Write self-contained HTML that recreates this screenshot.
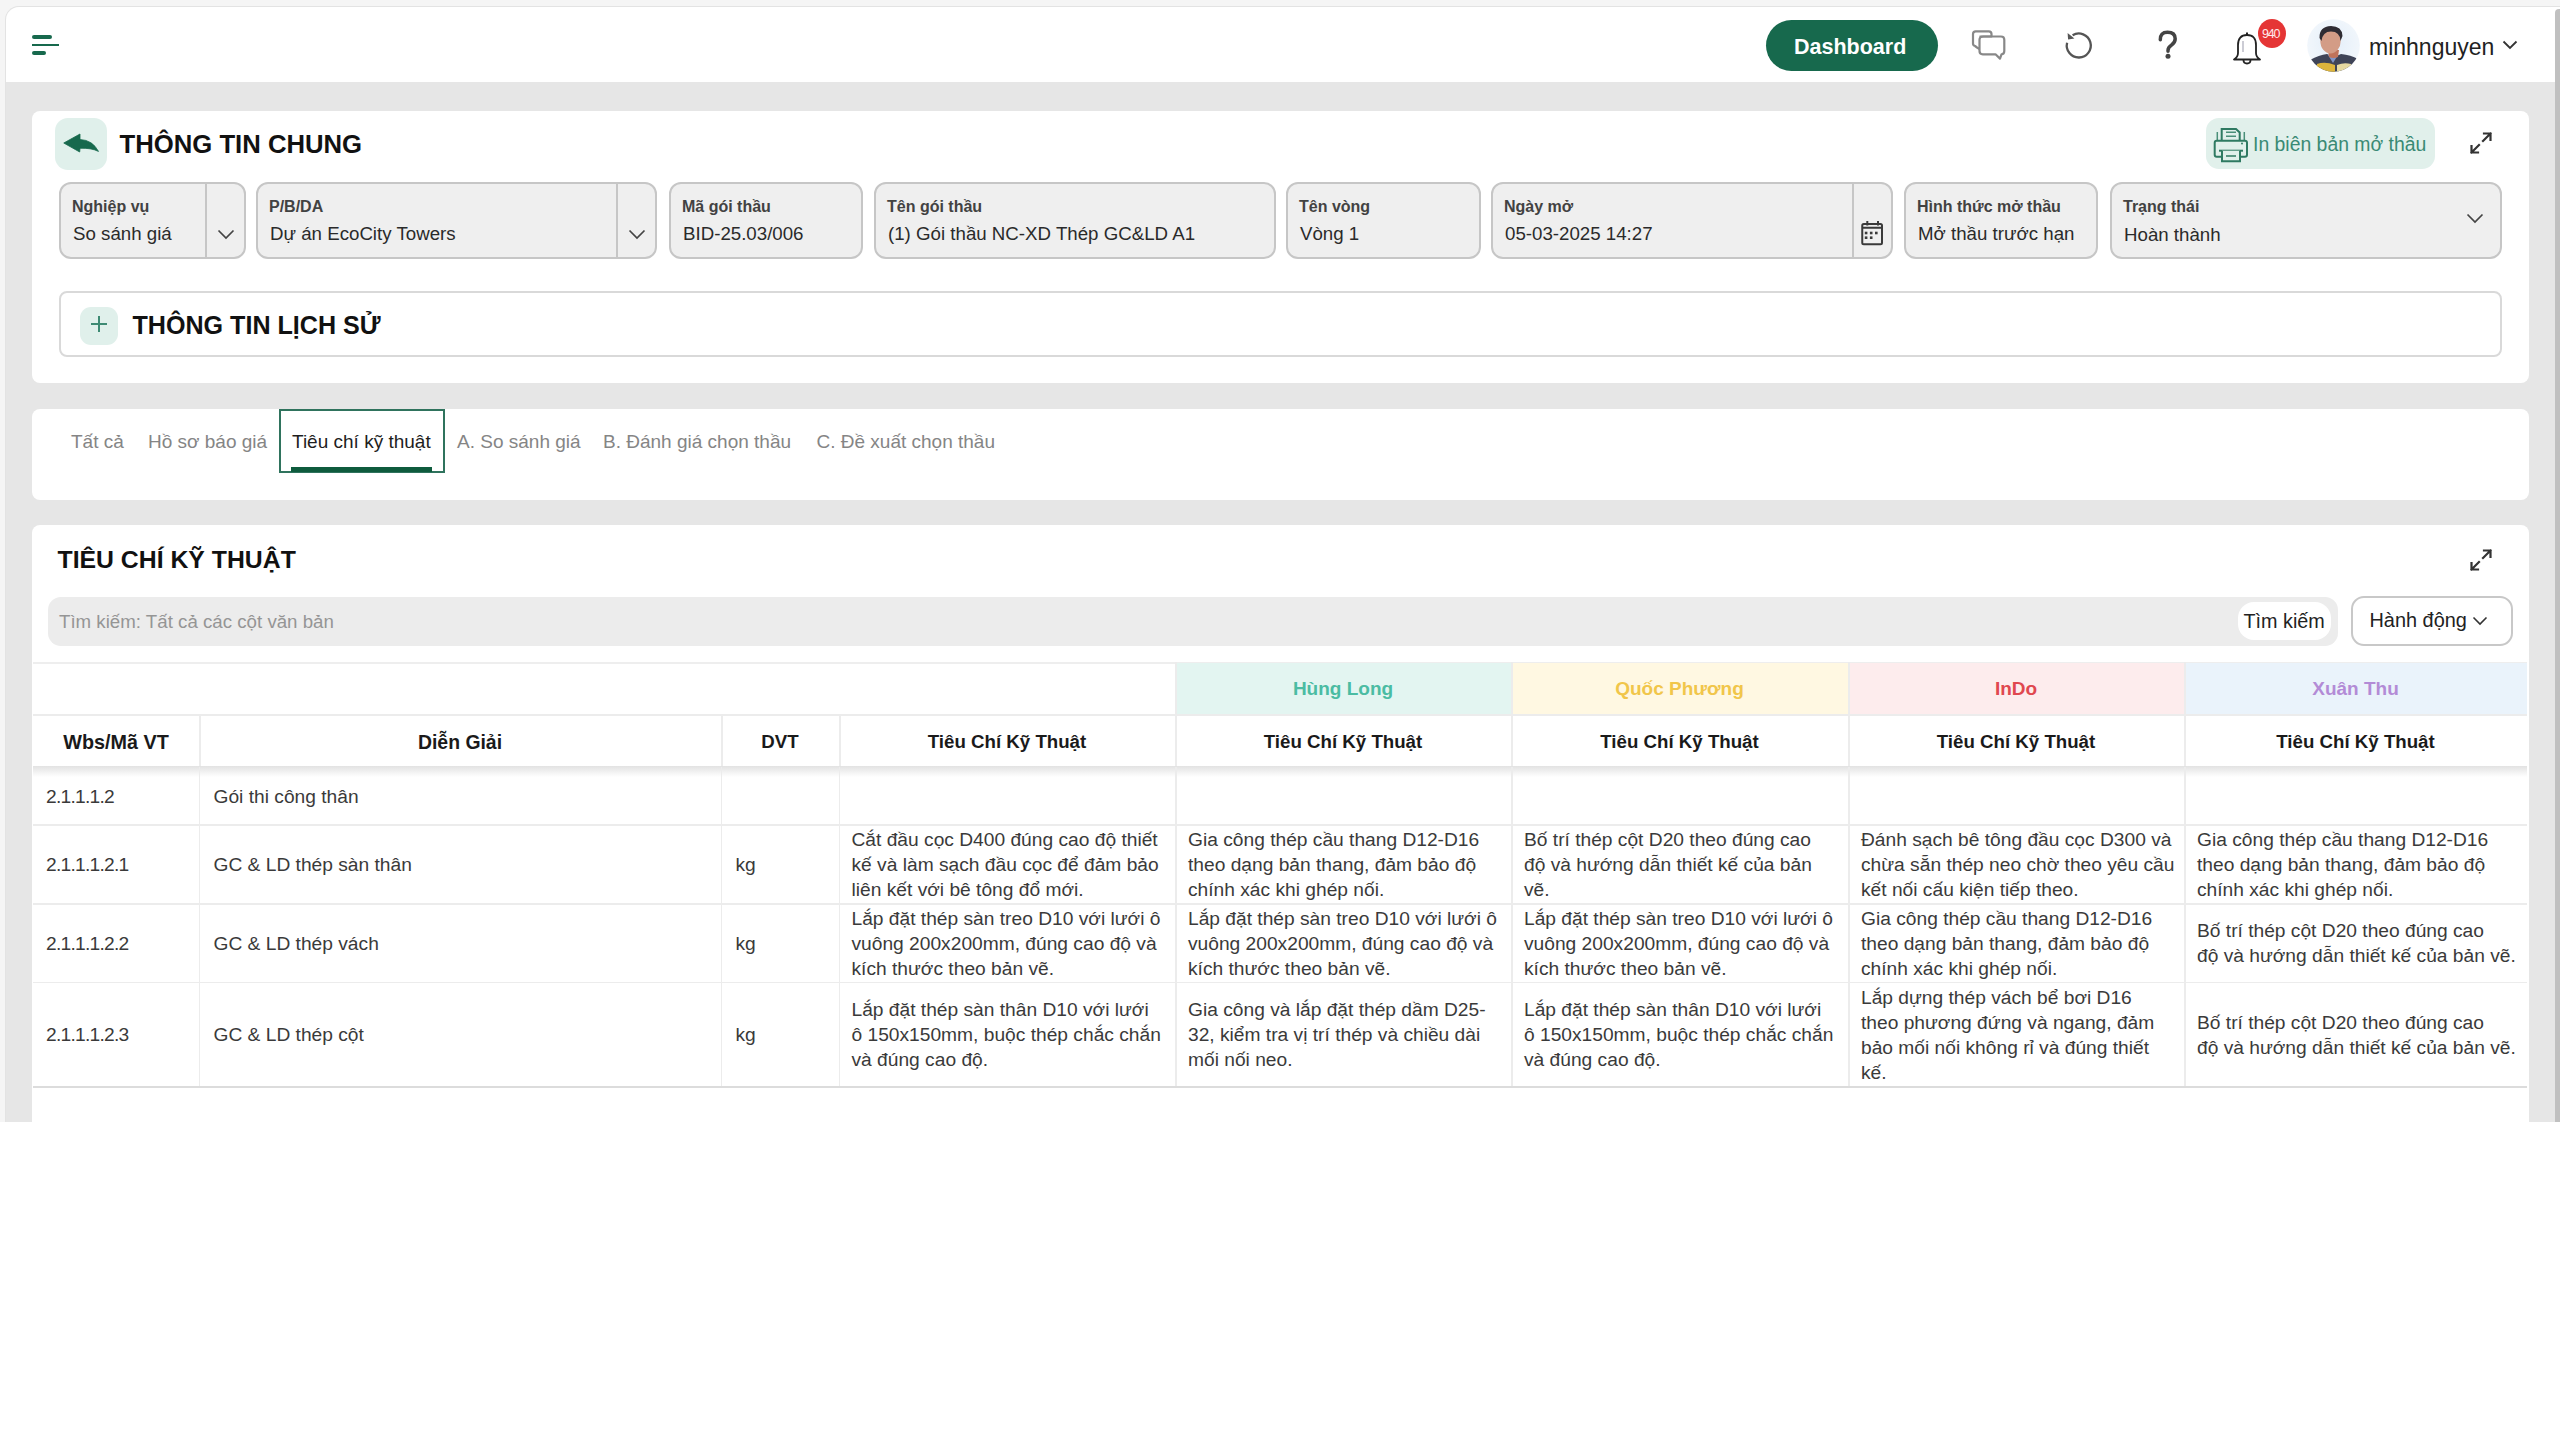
<!DOCTYPE html>
<html><head><meta charset="utf-8">
<style>
*{box-sizing:border-box;margin:0;padding:0}
html,body{width:2560px;height:1440px;overflow:hidden;background:#fff}
body{position:relative;font-family:"Liberation Sans",sans-serif;color:#222}
.abs{position:absolute}
.t{position:absolute;white-space:nowrap;line-height:1}
.card{position:absolute;background:#fff;border-radius:10px}
.fld{position:absolute;background:#efefef;border:2px solid #c6c6c6;border-radius:12px}
.sep{position:absolute;top:0;bottom:0;width:2px;background:#c6c6c6}
.cell{position:absolute;display:flex;align-items:center;font-size:19.2px;line-height:25px;color:#3a3a3a}
.hc{position:absolute;display:flex;align-items:center;justify-content:center;font-weight:bold;font-size:18.7px;color:#1a1a1a}
</style></head>
<body>
<div class="abs" style="left:0px;top:0px;width:2560px;height:1122px;background:#f5f5f5"></div>
<div class="abs" style="left:5px;top:6px;width:2555px;height:1116px;background:#e6e6e6;border-top:1px solid #e3e3e3;border-left:1px solid #e3e3e3;border-top-left-radius:14px;overflow:hidden"><div class="abs" style="left:0;top:0;width:2554px;height:75px;background:#fff"></div></div>
<div class="abs" style="left:2554.5px;top:8.5px;width:5.5px;height:1113.5px;background:#c0c0c0;border-top-left-radius:4px"></div>
<div class="abs" style="left:32px;top:35px;width:20px;height:4px;background:#17694d;border-radius:2px"></div>
<div class="abs" style="left:32px;top:44px;width:27px;height:2px;background:#17694d"></div>
<div class="abs" style="left:32px;top:51px;width:14px;height:4px;background:#17694d;border-radius:2px"></div>
<div class="abs" style="left:1766px;top:20px;width:172px;height:51px;background:#17694d;border-radius:26px"></div>
<div class="t" id="t_dash" style="left:1794.00px;top:36.80px;font-size:21.5px;color:#fff;font-weight:bold;">Dashboard</div>
<svg class="abs" style="left:1960px;top:20px;" width="60" height="50" viewBox="0 0 60 50"><g fill="none" stroke="#888" stroke-width="2.2" stroke-linejoin="round"><path d="M19.5 16.5 H31.5 V14 Q31.5 11.3 28.8 11.3 H15.7 Q13 11.3 13 14 V23.5 Q13 25.5 15 26 L17 27.5 L19.5 29"/><path d="M23.5 16.5 H41 Q44.3 16.5 44.3 19.8 V31 Q44.3 34.2 41.5 34.3 L40 38.6 L35.5 34.3 H22.8 Q19.5 34.3 19.5 31 V19.8 Q19.5 16.5 23.5 16.5 Z"/></g></svg>
<svg class="abs" style="left:2055px;top:20px;" width="50" height="50" viewBox="0 0 50 50"><path d="M12.1 22.7 A12 12 0 1 0 17.6 15.2" fill="none" stroke="#555" stroke-width="2.3"/><path d="M12.6 12.9 L13.1 19.6 L19.4 18.4 Z" fill="#555"/></svg>
<svg class="abs" style="left:2156px;top:30px;" width="24" height="32" viewBox="0 0 24 32"><path d="M4.3 9.8 Q4 2.3 11.5 2.3 Q19.2 2.3 19.2 8.8 Q19.2 12.8 15.3 15.2 Q12 17.3 12 20.5 V21.3" fill="none" stroke="#444" stroke-width="3.5" stroke-linecap="round"/><circle cx="12" cy="26.2" r="2.5" fill="#444"/></svg>
<svg class="abs" style="left:2230px;top:30px;" width="34" height="36" viewBox="0 0 34 36"><path d="M17 2.5 V5" stroke="#222" stroke-width="2"/><path d="M17 5 Q8 5 8 15 V23 Q8 27 4 29.5 H30 Q26 27 26 23 V15 Q26 5 17 5 Z" fill="#fff" stroke="#222" stroke-width="1.8" stroke-linejoin="round"/><path d="M13.5 30 Q13.5 33.5 17 33.5 Q20.5 33.5 20.5 30" fill="none" stroke="#222" stroke-width="1.8"/><path d="M13 11 V22" stroke="#99a" stroke-width="1"/></svg>
<div class="abs" style="left:2258px;top:19px;width:28px;height:29px;background:#e53535;border-radius:50%"></div>
<div class="t" style="left:2262.00px;top:27.92px;font-size:12.5px;color:#ffeaea;letter-spacing:-1.2px;">940</div>
<svg class="abs" style="left:2307px;top:19px;" width="53" height="53" viewBox="0 0 53 53"><defs><clipPath id="av"><circle cx="26.5" cy="26.5" r="26.3"/></clipPath><radialGradient id="avbg" cx="0.5" cy="0.45" r="0.6"><stop offset="0" stop-color="#e3eef9"/><stop offset="1" stop-color="#f4f8fc"/></radialGradient></defs><g clip-path="url(#av)"><rect width="53" height="53" fill="url(#avbg)"/><path d="M3 41 Q12 36 20 35 L27 38 L34 35 Q44 36 51 40 V53 H3 Z" fill="#3f4457"/><path d="M21 36 L26 44 L31 36 Z" fill="#8095c8"/><path d="M10 45 Q18 42 28 46 V53 H10 Z" fill="#dcb43c"/><path d="M30 46 Q37 43 44 45 V53 H30 Z" fill="#e6d9a0"/><path d="M21 31 L22 38 Q26.5 40 31 38 L32 31 Z" fill="#c0735a"/><ellipse cx="23.5" cy="22" rx="10.2" ry="12.5" fill="#d39c86"/><path d="M12.5 19 Q12 7.5 24 7 Q35 7 35.5 17 L33.5 22 Q33 12.5 24 12.5 Q15.5 12.5 14.5 22 Z" fill="#2e2b33"/></g></svg>
<div class="t" id="t_user" style="left:2369.00px;top:36.03px;font-size:23px;color:#222;">minhnguyen</div>
<svg class="abs" style="left:2502px;top:40px;" width="16" height="10" viewBox="0 0 16 10"><path d="M1.5 1.5 L8 8 L14.5 1.5" fill="none" stroke="#333" stroke-width="1.8"/></svg>
<div class="abs" style="left:32px;top:111px;width:2497px;height:272px;background:#fff;border-radius:8px"></div>
<div class="abs" style="left:55px;top:118px;width:52px;height:52px;background:#e0f0eb;border-radius:13px"></div>
<svg class="abs" style="left:55px;top:118px;" width="52" height="52" viewBox="0 0 52 52"><path d="M8.75 25 L25 16 L25 21.5 Q37.5 22 43.5 33.4 Q36 29.8 25 30.3 L24.7 34 Z" fill="#17694d" stroke="#17694d" stroke-width="0.8" stroke-linejoin="round"/></svg>
<div class="t" id="t_c1" style="left:119.50px;top:131.74px;font-size:25.7px;color:#111;font-weight:bold;">THÔNG TIN CHUNG</div>
<div class="abs" style="left:2206px;top:118px;width:229px;height:51px;background:#e1f0eb;border-radius:13px"></div>
<svg class="abs" style="left:2210px;top:126px;" width="42" height="38" viewBox="0 0 42 38"><g fill="none" stroke="#2f7a62" stroke-width="2"><path d="M11.7 14 V3 H26 L29.7 6.5 V14"/><path d="M16 6.3 H26 M16 10.3 H26" stroke-width="1.5" stroke="#4a8f79"/><path d="M7.3 6 V14 M34.3 6 V14" stroke-width="1.5" stroke="#4a8f79"/><rect x="4.7" y="14.7" width="32.3" height="16" rx="2"/><path d="M9 24.7 H33"/><path d="M12 24.7 V35.3 H30 V24.7" fill="#e1f0eb"/><path d="M16 30 H26" stroke-width="1.5"/></g><circle cx="32" cy="17.6" r="1" fill="#2f7a62"/></svg>
<div class="t" id="t_print" style="left:2253.00px;top:134.77px;font-size:19.4px;color:#3a8a74;">In biên bản mở thầu</div>
<svg class="abs" style="left:2469px;top:131px;" width="24" height="24" viewBox="0 0 24 24"><g fill="none" stroke="#333" stroke-width="2.2" stroke-linecap="square"><path d="M14 10 L21.5 2.5 M15 2.5 H21.5 V9"/><path d="M10 14 L2.5 21.5 M2.5 15 V21.5 H9"/></g></svg>
<div class="fld" style="left:59px;top:182px;width:187px;height:77px"><div class="sep" style="left:144px"></div></div>
<div class="t" id="fl0" style="left:72.00px;top:199.45px;font-size:16px;color:#424242;font-weight:bold;">Nghiệp vụ</div>
<div class="t" id="fv0" style="left:73.00px;top:224.97px;font-size:18.7px;color:#2a2a2a;">So sánh giá</div>
<svg class="abs" style="left:216.5px;top:229px;" width="18" height="11" viewBox="0 0 18 11"><path d="M1.5 1.5 L9 9 L16.5 1.5" fill="none" stroke="#444" stroke-width="1.7"/></svg>
<div class="fld" style="left:256px;top:182px;width:401px;height:77px"><div class="sep" style="left:358px"></div></div>
<div class="t" id="fl1" style="left:269.00px;top:199.45px;font-size:16px;color:#424242;font-weight:bold;">P/B/DA</div>
<div class="t" id="fv1" style="left:270.00px;top:224.97px;font-size:18.7px;color:#2a2a2a;">Dự án EcoCity Towers</div>
<svg class="abs" style="left:627.5px;top:229px;" width="18" height="11" viewBox="0 0 18 11"><path d="M1.5 1.5 L9 9 L16.5 1.5" fill="none" stroke="#444" stroke-width="1.7"/></svg>
<div class="fld" style="left:669px;top:182px;width:194px;height:77px"></div>
<div class="t" id="fl2" style="left:682.00px;top:199.45px;font-size:16px;color:#424242;font-weight:bold;">Mã gói thầu</div>
<div class="t" id="fv2" style="left:683.00px;top:224.97px;font-size:18.7px;color:#2a2a2a;">BID-25.03/006</div>
<div class="fld" style="left:874px;top:182px;width:402px;height:77px"></div>
<div class="t" id="fl3" style="left:887.00px;top:199.45px;font-size:16px;color:#424242;font-weight:bold;">Tên gói thầu</div>
<div class="t" id="fv3" style="left:888.00px;top:224.97px;font-size:18.7px;color:#2a2a2a;">(1) Gói thầu NC-XD Thép GC&amp;LD A1</div>
<div class="fld" style="left:1286px;top:182px;width:195px;height:77px"></div>
<div class="t" id="fl4" style="left:1299.00px;top:199.45px;font-size:16px;color:#424242;font-weight:bold;">Tên vòng</div>
<div class="t" id="fv4" style="left:1300.00px;top:224.97px;font-size:18.7px;color:#2a2a2a;">Vòng 1</div>
<div class="fld" style="left:1491px;top:182px;width:402px;height:77px"><div class="sep" style="left:359px"></div></div>
<div class="t" id="fl5" style="left:1504.00px;top:199.45px;font-size:16px;color:#424242;font-weight:bold;">Ngày mở</div>
<div class="t" id="fv5" style="left:1505.00px;top:224.97px;font-size:18.7px;color:#2a2a2a;">05-03-2025 14:27</div>
<svg class="abs" style="left:1859px;top:219px;" width="26" height="28" viewBox="0 0 26 28"><g fill="none" stroke="#3a3a3a" stroke-width="2"><rect x="3.25" y="5" width="19.75" height="20.2" rx="1.5"/><path d="M3.25 8.8 H23 M8.3 2 V6.5 M19 2 V6.5"/></g><g fill="#3a3a3a"><rect x="5.8" y="12.7" width="2.6" height="2.6"/><rect x="10.9" y="12.7" width="2.6" height="2.6"/><rect x="16" y="12.7" width="2.6" height="2.6"/><rect x="5.8" y="17.4" width="2.6" height="2.6"/><rect x="10.9" y="17.4" width="2.6" height="2.6"/></g></svg>
<div class="fld" style="left:1904px;top:182px;width:194px;height:77px"></div>
<div class="t" id="fl6" style="left:1917.00px;top:199.45px;font-size:16px;color:#424242;font-weight:bold;">Hình thức mở thầu</div>
<div class="t" id="fv6" style="left:1918.00px;top:224.97px;font-size:18.7px;color:#2a2a2a;">Mở thầu trước hạn</div>
<div class="fld" style="left:2110px;top:182px;width:392px;height:77px"></div>
<div class="t" id="fl7" style="left:2123.00px;top:199.45px;font-size:16px;color:#424242;font-weight:bold;">Trạng thái</div>
<div class="t" id="fv7" style="left:2124.00px;top:226.17px;font-size:18.7px;color:#2a2a2a;">Hoàn thành</div>
<svg class="abs" style="left:2466px;top:213px;" width="18" height="11" viewBox="0 0 18 11"><path d="M1.5 1.5 L9 9 L16.5 1.5" fill="none" stroke="#444" stroke-width="1.7"/></svg>
<div class="abs" style="left:59px;top:291px;width:2443px;height:66px;border:2px solid #d9d9d9;border-radius:8px;background:#fff"></div>
<div class="abs" style="left:80px;top:307px;width:38px;height:38px;background:#e0f0eb;border-radius:11px"></div>
<div class="abs" style="left:91px;top:323.2px;width:16px;height:1.8px;background:#3d8a73"></div>
<div class="abs" style="left:98.1px;top:316px;width:1.8px;height:16px;background:#3d8a73"></div>
<div class="t" id="t_hist" style="left:132.50px;top:312.75px;font-size:25.1px;color:#111;font-weight:bold;">THÔNG TIN LỊCH SỬ</div>
<div class="abs" style="left:32px;top:409px;width:2497px;height:91px;background:#fff;border-radius:8px"></div>
<div class="abs" style="left:279px;top:409px;width:166px;height:64px;border:2px solid #2f735d"></div>
<div class="abs" style="left:291px;top:467px;width:141px;height:5px;background:#0e5b3d"></div>
<div class="t" id="tab0" style="left:71.00px;top:431.91px;font-size:19px;color:#858585;">Tất cả</div>
<div class="t" id="tab1" style="left:148.00px;top:431.91px;font-size:19px;color:#858585;">Hồ sơ báo giá</div>
<div class="t" id="tab2" style="left:292.00px;top:431.91px;font-size:19px;color:#1e1e1e;">Tiêu chí kỹ thuật</div>
<div class="t" id="tab3" style="left:457.00px;top:431.91px;font-size:19px;color:#858585;">A. So sánh giá</div>
<div class="t" id="tab4" style="left:603.00px;top:431.91px;font-size:19px;color:#858585;">B. Đánh giá chọn thầu</div>
<div class="t" id="tab5" style="left:816.50px;top:431.91px;font-size:19px;color:#858585;">C. Đề xuất chọn thầu</div>
<div class="abs" style="left:32px;top:525px;width:2497px;height:597px;background:#fff;border-top-left-radius:8px;border-top-right-radius:8px"></div>
<div class="t" id="t_c3" style="left:57.50px;top:547.50px;font-size:24.8px;color:#111;font-weight:bold;">TIÊU CHÍ KỸ THUẬT</div>
<svg class="abs" style="left:2469px;top:548px;" width="24" height="24" viewBox="0 0 24 24"><g fill="none" stroke="#333" stroke-width="2.2" stroke-linecap="square"><path d="M14 10 L21.5 2.5 M15 2.5 H21.5 V9"/><path d="M10 14 L2.5 21.5 M2.5 15 V21.5 H9"/></g></svg>
<div class="abs" style="left:48px;top:597px;width:2290px;height:49px;background:#ececec;border-radius:13px"></div>
<div class="t" id="t_ph" style="left:59.00px;top:612.77px;font-size:18.7px;color:#959595;">Tìm kiếm: Tất cả các cột văn bản</div>
<div class="abs" style="left:2238px;top:602px;width:93px;height:38px;background:#fff;border-radius:16px"></div>
<div class="t" id="t_tk" style="left:2243.50px;top:611.54px;font-size:19.8px;color:#222;">Tìm kiếm</div>
<div class="abs" style="left:2351px;top:596px;width:162px;height:50px;border:2px solid #c8c8c8;border-radius:13px;background:#fff"></div>
<div class="t" id="t_hd" style="left:2369.50px;top:611.45px;font-size:19.9px;color:#222;">Hành động</div>
<svg class="abs" style="left:2472px;top:616px;" width="16" height="11" viewBox="0 0 16 11"><path d="M1.5 1.5 L8 8 L14.5 1.5" fill="none" stroke="#333" stroke-width="1.6"/></svg>
<div class="abs" style="left:33px;top:662px;width:2494px;height:1.5px;background:#eeeeee"></div>
<div class="abs" style="left:1175px;top:663px;width:336px;height:52px;background:#e3f5f1"></div>
<div class="hc" style="left:1175px;top:663px;width:336px;height:52px;color:#4bbca3;font-size:19px;padding-bottom:1px">Hùng Long</div>
<div class="abs" style="left:1511px;top:663px;width:337px;height:52px;background:#fff8e2"></div>
<div class="hc" style="left:1511px;top:663px;width:337px;height:52px;color:#f1c64a;font-size:19px;padding-bottom:1px">Quốc Phương</div>
<div class="abs" style="left:1848px;top:663px;width:336px;height:52px;background:#fdeced"></div>
<div class="hc" style="left:1848px;top:663px;width:336px;height:52px;color:#e0474f;font-size:19px;padding-bottom:1px">InDo</div>
<div class="abs" style="left:2184px;top:663px;width:343px;height:52px;background:#eaf3fb"></div>
<div class="hc" style="left:2184px;top:663px;width:343px;height:52px;color:#b38bd6;font-size:19px;padding-bottom:1px">Xuân Thu</div>
<div class="abs" style="left:33px;top:714px;width:2494px;height:2px;background:#ececec"></div>
<div class="hc" style="left:33px;top:715px;width:166px;height:52px;padding-top:2px;font-size:19.8px;">Wbs/Mã VT</div>
<div class="hc" style="left:199px;top:715px;width:522px;height:52px;padding-top:2px;font-size:19.4px;">Diễn Giải</div>
<div class="hc" style="left:721px;top:715px;width:118px;height:52px;padding-top:2px;">DVT</div>
<div class="hc" style="left:839px;top:715px;width:336px;height:52px;padding-top:2px;">Tiêu Chí Kỹ Thuật</div>
<div class="hc" style="left:1175px;top:715px;width:336px;height:52px;padding-top:2px;">Tiêu Chí Kỹ Thuật</div>
<div class="hc" style="left:1511px;top:715px;width:337px;height:52px;padding-top:2px;">Tiêu Chí Kỹ Thuật</div>
<div class="hc" style="left:1848px;top:715px;width:336px;height:52px;padding-top:2px;">Tiêu Chí Kỹ Thuật</div>
<div class="hc" style="left:2184px;top:715px;width:343px;height:52px;padding-top:2px;">Tiêu Chí Kỹ Thuật</div>
<div class="abs" style="left:199px;top:715px;width:1.5px;height:52px;background:#ececec"></div>
<div class="abs" style="left:721px;top:715px;width:1.5px;height:52px;background:#ececec"></div>
<div class="abs" style="left:839px;top:715px;width:1.5px;height:52px;background:#ececec"></div>
<div class="abs" style="left:1175px;top:715px;width:1.5px;height:52px;background:#ececec"></div>
<div class="abs" style="left:1511px;top:715px;width:1.5px;height:52px;background:#ececec"></div>
<div class="abs" style="left:1848px;top:715px;width:1.5px;height:52px;background:#ececec"></div>
<div class="abs" style="left:2184px;top:715px;width:1.5px;height:52px;background:#ececec"></div>
<div class="abs" style="left:1175px;top:662px;width:1.5px;height:53px;background:#ececec"></div>
<div class="abs" style="left:1511px;top:662px;width:1.5px;height:53px;background:#ececec"></div>
<div class="abs" style="left:1848px;top:662px;width:1.5px;height:53px;background:#ececec"></div>
<div class="abs" style="left:2184px;top:662px;width:1.5px;height:53px;background:#ececec"></div>
<div class="abs" style="left:33px;top:766px;width:2494px;height:11px;background:linear-gradient(#e2e2e2,rgba(255,255,255,0))"></div>
<div class="cell" style="left:46px;top:767px;width:152.5px;height:58px;letter-spacing:-0.75px;">2.1.1.1.2</div>
<div class="cell" style="left:213.5px;top:767px;width:507.0px;height:58px;">Gói thi công thân</div>
<div class="abs" style="left:33px;top:824px;width:2494px;height:1.5px;background:#ececec"></div>
<div class="abs" style="left:198.5px;top:767px;width:1.5px;height:58px;background:#ececec"></div>
<div class="abs" style="left:720.5px;top:767px;width:1.5px;height:58px;background:#ececec"></div>
<div class="abs" style="left:838.5px;top:767px;width:1.5px;height:58px;background:#ececec"></div>
<div class="abs" style="left:1175px;top:767px;width:1.5px;height:58px;background:#ececec"></div>
<div class="abs" style="left:1511px;top:767px;width:1.5px;height:58px;background:#ececec"></div>
<div class="abs" style="left:1848px;top:767px;width:1.5px;height:58px;background:#ececec"></div>
<div class="abs" style="left:2184px;top:767px;width:1.5px;height:58px;background:#ececec"></div>
<div class="cell" style="left:46px;top:825px;width:152.5px;height:79px;letter-spacing:-0.75px;">2.1.1.1.2.1</div>
<div class="cell" style="left:213.5px;top:825px;width:507.0px;height:79px;">GC &amp; LD thép sàn thân</div>
<div class="cell" style="left:735.5px;top:825px;width:103.0px;height:79px;">kg</div>
<div class="cell" style="left:851.5px;top:825px;width:323.5px;height:79px;">Cắt đầu cọc D400 đúng cao độ thiết<br>kế và làm sạch đầu cọc để đảm bảo<br>liên kết với bê tông đổ mới.</div>
<div class="cell" style="left:1188px;top:825px;width:323px;height:79px;">Gia công thép cầu thang D12-D16<br>theo dạng bản thang, đảm bảo độ<br>chính xác khi ghép nối.</div>
<div class="cell" style="left:1524px;top:825px;width:324px;height:79px;">Bố trí thép cột D20 theo đúng cao<br>độ và hướng dẫn thiết kế của bản<br>vẽ.</div>
<div class="cell" style="left:1861px;top:825px;width:323px;height:79px;">Đánh sạch bê tông đầu cọc D300 và<br>chừa sẵn thép neo chờ theo yêu cầu<br>kết nối cấu kiện tiếp theo.</div>
<div class="cell" style="left:2197px;top:825px;width:330px;height:79px;">Gia công thép cầu thang D12-D16<br>theo dạng bản thang, đảm bảo độ<br>chính xác khi ghép nối.</div>
<div class="abs" style="left:33px;top:903px;width:2494px;height:1.5px;background:#ececec"></div>
<div class="abs" style="left:198.5px;top:825px;width:1.5px;height:79px;background:#ececec"></div>
<div class="abs" style="left:720.5px;top:825px;width:1.5px;height:79px;background:#ececec"></div>
<div class="abs" style="left:838.5px;top:825px;width:1.5px;height:79px;background:#ececec"></div>
<div class="abs" style="left:1175px;top:825px;width:1.5px;height:79px;background:#ececec"></div>
<div class="abs" style="left:1511px;top:825px;width:1.5px;height:79px;background:#ececec"></div>
<div class="abs" style="left:1848px;top:825px;width:1.5px;height:79px;background:#ececec"></div>
<div class="abs" style="left:2184px;top:825px;width:1.5px;height:79px;background:#ececec"></div>
<div class="cell" style="left:46px;top:904px;width:152.5px;height:78.5px;letter-spacing:-0.75px;">2.1.1.1.2.2</div>
<div class="cell" style="left:213.5px;top:904px;width:507.0px;height:78.5px;">GC &amp; LD thép vách</div>
<div class="cell" style="left:735.5px;top:904px;width:103.0px;height:78.5px;">kg</div>
<div class="cell" style="left:851.5px;top:904px;width:323.5px;height:78.5px;">Lắp đặt thép sàn treo D10 với lưới ô<br>vuông 200x200mm, đúng cao độ và<br>kích thước theo bản vẽ.</div>
<div class="cell" style="left:1188px;top:904px;width:323px;height:78.5px;">Lắp đặt thép sàn treo D10 với lưới ô<br>vuông 200x200mm, đúng cao độ và<br>kích thước theo bản vẽ.</div>
<div class="cell" style="left:1524px;top:904px;width:324px;height:78.5px;">Lắp đặt thép sàn treo D10 với lưới ô<br>vuông 200x200mm, đúng cao độ và<br>kích thước theo bản vẽ.</div>
<div class="cell" style="left:1861px;top:904px;width:323px;height:78.5px;">Gia công thép cầu thang D12-D16<br>theo dạng bản thang, đảm bảo độ<br>chính xác khi ghép nối.</div>
<div class="cell" style="left:2197px;top:904px;width:330px;height:78.5px;">Bố trí thép cột D20 theo đúng cao<br>độ và hướng dẫn thiết kế của bản vẽ.</div>
<div class="abs" style="left:33px;top:981.5px;width:2494px;height:1.5px;background:#ececec"></div>
<div class="abs" style="left:198.5px;top:904px;width:1.5px;height:78.5px;background:#ececec"></div>
<div class="abs" style="left:720.5px;top:904px;width:1.5px;height:78.5px;background:#ececec"></div>
<div class="abs" style="left:838.5px;top:904px;width:1.5px;height:78.5px;background:#ececec"></div>
<div class="abs" style="left:1175px;top:904px;width:1.5px;height:78.5px;background:#ececec"></div>
<div class="abs" style="left:1511px;top:904px;width:1.5px;height:78.5px;background:#ececec"></div>
<div class="abs" style="left:1848px;top:904px;width:1.5px;height:78.5px;background:#ececec"></div>
<div class="abs" style="left:2184px;top:904px;width:1.5px;height:78.5px;background:#ececec"></div>
<div class="cell" style="left:46px;top:982.5px;width:152.5px;height:104.5px;letter-spacing:-0.75px;">2.1.1.1.2.3</div>
<div class="cell" style="left:213.5px;top:982.5px;width:507.0px;height:104.5px;">GC &amp; LD thép cột</div>
<div class="cell" style="left:735.5px;top:982.5px;width:103.0px;height:104.5px;">kg</div>
<div class="cell" style="left:851.5px;top:982.5px;width:323.5px;height:104.5px;">Lắp đặt thép sàn thân D10 với lưới<br>ô 150x150mm, buộc thép chắc chắn<br>và đúng cao độ.</div>
<div class="cell" style="left:1188px;top:982.5px;width:323px;height:104.5px;">Gia công và lắp đặt thép dầm D25-<br>32, kiểm tra vị trí thép và chiều dài<br>mối nối neo.</div>
<div class="cell" style="left:1524px;top:982.5px;width:324px;height:104.5px;">Lắp đặt thép sàn thân D10 với lưới<br>ô 150x150mm, buộc thép chắc chắn<br>và đúng cao độ.</div>
<div class="cell" style="left:1861px;top:982.5px;width:323px;height:104.5px;">Lắp dựng thép vách bể bơi D16<br>theo phương đứng và ngang, đảm<br>bảo mối nối không rỉ và đúng thiết<br>kế.</div>
<div class="cell" style="left:2197px;top:982.5px;width:330px;height:104.5px;">Bố trí thép cột D20 theo đúng cao<br>độ và hướng dẫn thiết kế của bản vẽ.</div>
<div class="abs" style="left:198.5px;top:982.5px;width:1.5px;height:104.5px;background:#ececec"></div>
<div class="abs" style="left:720.5px;top:982.5px;width:1.5px;height:104.5px;background:#ececec"></div>
<div class="abs" style="left:838.5px;top:982.5px;width:1.5px;height:104.5px;background:#ececec"></div>
<div class="abs" style="left:1175px;top:982.5px;width:1.5px;height:104.5px;background:#ececec"></div>
<div class="abs" style="left:1511px;top:982.5px;width:1.5px;height:104.5px;background:#ececec"></div>
<div class="abs" style="left:1848px;top:982.5px;width:1.5px;height:104.5px;background:#ececec"></div>
<div class="abs" style="left:2184px;top:982.5px;width:1.5px;height:104.5px;background:#ececec"></div>
<div class="abs" style="left:33px;top:1086px;width:2494px;height:2px;background:#dcdcdc"></div>
</body></html>
